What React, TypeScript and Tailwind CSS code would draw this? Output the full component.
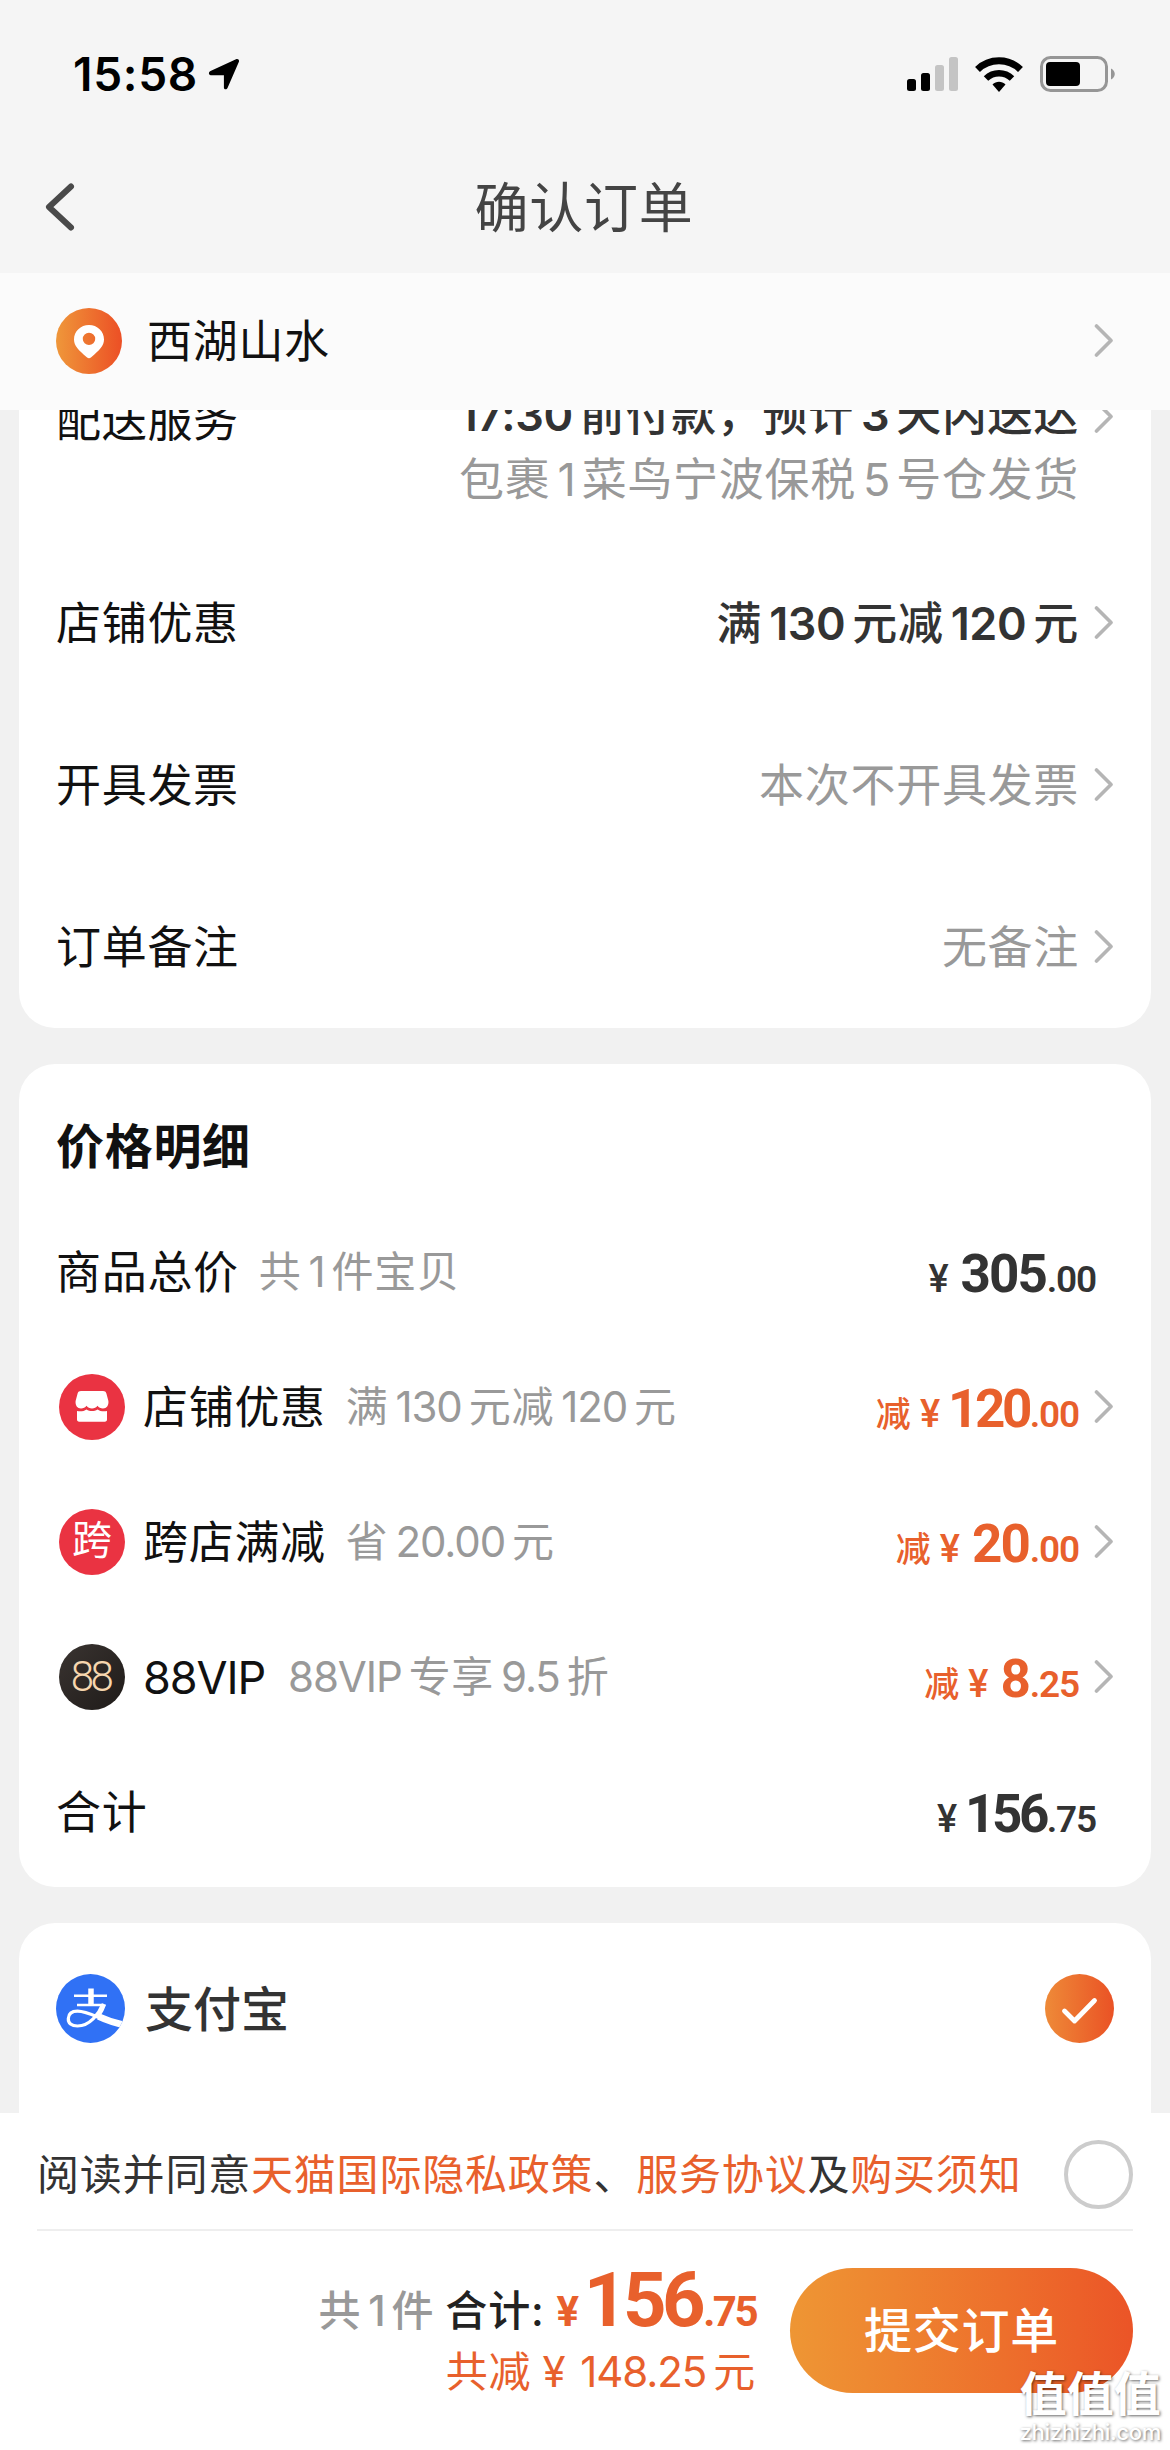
import type { ReactNode } from 'react';
import clsx from 'clsx';

interface OrderOption {
  label: string;
  value: string;
  strong?: boolean;
}

interface PriceLine {
  label: string;
  note?: string;
  icon?: ReactNode;
  integer: string;
  decimal: string;
  discount?: boolean;
}

const orderOptions: OrderOption[] = [
  { label: '店铺优惠', value: '满130元减120元', strong: true },
  { label: '开具发票', value: '本次不开具发票' },
  { label: '订单备注', value: '无备注' },
];

const priceLines: PriceLine[] = [
  { label: '商品总价', note: '共1件宝贝', integer: '305', decimal: '.00' },
  { label: '店铺优惠', note: '满130元减120元', icon: <ShopIcon />, integer: '120', decimal: '.00', discount: true },
  { label: '跨店满减', note: '省20.00元', icon: <CrossIcon />, integer: '20', decimal: '.00', discount: true },
  { label: '88VIP', note: '88VIP专享9.5折', icon: <VipIcon />, integer: '8', decimal: '.25', discount: true },
  { label: '合计', integer: '156', decimal: '.75' },
];

// Chinese text with slightly spaced, tighter set latin runs
function Mixed({ text, strong }: { text: string; strong?: boolean }) {
  return text.split(/([!-~]+)/).map((part, i) =>
    i % 2 === 1 ? (
      <span
        key={i}
        className={clsx(
          'mr-[7px]',
          strong ? 'font-semibold tracking-[-0.4px]' : 'tracking-[-1.1px]',
          !text.startsWith(part) && 'ml-[7px]'
        )}
      >
        {part}
      </span>
    ) : (
      part
    )
  );
}

function ShopIcon() {
  return (
    <svg className="size-[66px]" viewBox="0 0 66 66">
      <circle cx="33" cy="33" r="33" fill="#ea3342" />
      <path
        d="M22 17h22c1.800 0 2.800.8 3.400 2.400l2 7.600c.5 4.500-1.800 7.500-5.400 7.500-2.400 0-4.200-1-5.500-2.700-1.300 1.700-3.200 2.700-5.500 2.700s-4.200-1-5.500-2.700c-1.300 1.700-3.100 2.700-5.500 2.700-3.600 0-5.900-3-5.400-7.500l2-7.600c.6-1.600 1.600-2.400 3.400-2.400z"
        fill="#fff"
      />
      <path d="M18 37c3.600.8 7 .2 9.500-1.600 3.300 2 7.700 2 11 0C41 37.200 44.400 37.800 48 37v8.500c0 1.400-.8 2.200-2.200 2.200H20.200c-1.400 0-2.200-.8-2.200-2.200z" fill="#fff" />
    </svg>
  );
}

function CrossIcon() {
  return (
    <span className="flex size-[66px] items-center justify-center rounded-full bg-[#ea3342] text-[40px] leading-none tracking-[0px] text-white">
      <span className="-mt-1">跨</span>
    </span>
  );
}

function VipIcon() {
  return (
    <span className="flex size-[66px] items-center justify-center rounded-full bg-linear-to-br from-[#3a3431] to-[#1f1b19] font-['Roboto',sans-serif] text-[42px] leading-none font-light tracking-[-3.5px] text-[#f6d6ae]">
      <span className="-ml-[3px]">88</span>
    </span>
  );
}

function LocationIcon() {
  return (
    <svg className="size-[66px]" viewBox="0 0 66 66">
      <defs>
        <linearGradient id="pin" x1="0" y1="0" x2="1" y2="0">
          <stop offset="0" stopColor="#ef973a" />
          <stop offset="1" stopColor="#ec4f25" />
        </linearGradient>
      </defs>
      <circle cx="33" cy="33" r="33" fill="url(#pin)" />
      <path
        fillRule="evenodd"
        d="M33 17c8.300 0 15 6.300 15 14.500 0 6.500-4.500 10.500-12.800 17.800a3.200 3.200 0 0 1-4.400 0C22.500 42 18 38 18 31.500 18 23.300 24.700 17 33 17zm0 7.700a6.200 6.200 0 1 0 0 12.400 6.200 6.200 0 0 0 0-12.400z"
        fill="#fff"
      />
    </svg>
  );
}

function AlipayIcon() {
  return (
    <svg className="size-[69px]" viewBox="0 0 69 69">
      <defs>
        <clipPath id="alipay">
          <circle cx="34.500" cy="34.500" r="34.500" />
        </clipPath>
      </defs>
      <g clipPath="url(#alipay)" fill="none" stroke="#fff">
        <rect width="69" height="69" fill="#3071f5" stroke="none" />
        <path d="M35 14.500V31" strokeWidth="5.500" />
        <path d="M18 21.800h33M21 31h26.500" strokeWidth="2.600" />
        <path d="M46.500 30.500C43 39.500 34 52 21.500 52c-6 0-9.500-3-9.200-7.500.3-4.800 4-7.300 9.200-7.300 9 0 19 5.800 30.500 10" strokeWidth="3.200" />
        <path d="M42.500 42.500c7.500 3.500 15.500 6.500 28 9" strokeWidth="6.500" />
        <path d="M48 30c-1.500 4.500-3.600 8.500-6.500 12.500" strokeWidth="4.500" />
      </g>
    </svg>
  );
}

function Chevron() {
  return (
    <svg className="ml-[15px] h-[34px] w-5 shrink-0" viewBox="0 0 20 34">
      <path d="M2.500 2 17 16.500 2.500 31" fill="none" stroke="#b5b5b5" strokeWidth="3.600" strokeLinecap="round" strokeLinejoin="round" />
    </svg>
  );
}

function StatusBar() {
  return (
    <div className="flex h-[148px] items-center pl-[73px] pr-[54px] text-black">
      <span className="w-[125px] text-[46px] leading-none font-semibold tracking-[0.7px] whitespace-nowrap">15:58</span>
      <svg className="ml-[10px] size-8" viewBox="0 0 32 32">
        <path d="M2.500 13 28 1.200c2-.9 3.700.7 2.800 2.800L19.500 30c-.9 2.100-3.600 1.600-3.600-.6V17.200H2.800C.5 17.200.2 14 2.500 13z" />
      </svg>
      <div className="ml-auto flex items-center">
        <svg className="h-[34px] w-[51px]" viewBox="0 0 51 34">
          <rect y="22" width="9" height="12" rx="2.500" />
          <rect x="14" y="16" width="9" height="18" rx="2.500" />
          <rect x="28" y="8" width="9" height="26" rx="2.500" fill="#c4c4c4" />
          <rect x="42" width="9" height="34" rx="2.500" fill="#c4c4c4" />
        </svg>
        <svg className="ml-[17px] h-9 w-12" viewBox="0 0 48 36">
          <path d="M2.500 13.500a31 31 0 0 1 43 0" fill="none" stroke="#000" strokeWidth="7" />
          <path d="M11 22.500a19 19 0 0 1 26 0" fill="none" stroke="#000" strokeWidth="6.500" />
          <path d="M24 36l-6.500-7.500c3.600-3.800 9.400-3.800 13 0z" />
        </svg>
        <svg className="ml-[17px] h-9 w-[76px]" viewBox="0 0 76 36">
          <rect x="1.500" y="1.500" width="65" height="33" rx="9" fill="none" stroke="#969696" strokeWidth="3" />
          <rect x="6" y="6" width="34" height="24" rx="4" />
          <path d="M71 12.500c5 2.500 5 8.500 0 11z" fill="#969696" />
        </svg>
      </div>
    </div>
  );
}

function Price({ integer, decimal, discount }: Pick<PriceLine, 'integer' | 'decimal' | 'discount'>) {
  return (
    <div
      className={clsx(
        "mt-[5px] ml-auto flex items-baseline font-['Roboto','Noto_Sans_CJK_SC',sans-serif] leading-none tracking-[0px]",
        discount ? 'text-[#e8602c]' : 'mr-[18px] text-[#333]'
      )}
    >
      {discount && <span className="mr-[9px] text-[35px] leading-none font-medium">减</span>}
      <span className={clsx('text-[38px] font-medium', integer.startsWith('1') ? 'mr-[8px]' : 'mr-[12px]')}>¥</span>
      <span className={clsx('text-[53px] font-bold', integer.startsWith('1') ? 'tracking-[-3.5px]' : 'tracking-[-2px]')}>
        {integer}
      </span>
      <span className="ml-px text-[37px] font-semibold tracking-[-1.2px]">{decimal}</span>
    </div>
  );
}

export default function App() {
  return (
    <div className="relative flex h-[2450px] w-[1170px] flex-col overflow-hidden bg-[#f1f1f1] font-['Inter','Noto_Sans_CJK_SC',sans-serif] text-[45px] leading-none tracking-[0.7px] text-[#111]">
      <header className="h-[273px] shrink-0 bg-[#f5f5f5]">
        <StatusBar />
        <div className="grid h-[118px] grid-cols-[1fr_auto_1fr] items-center pl-[44px] pr-[46px] text-[#444]">
          <svg className="h-[50px] w-8" viewBox="0 0 32 50">
            <path d="M27 4.500 5 25l22 20.500" fill="none" stroke="#4a4a4a" strokeWidth="6" strokeLinecap="round" strokeLinejoin="round" />
          </svg>
          <h1 className="pt-[3px] text-[54px] leading-none">确认订单</h1>
        </div>
      </header>

      <div className="flex h-[137px] shrink-0 items-center bg-[#fbfbfb] pb-0.5 pl-14 pr-[56px]">
        <LocationIcon />
        <span className="ml-[25px] pt-0.5">西湖山水</span>
        <span className="ml-auto">
          <Chevron />
        </span>
      </div>

      {/* Scrolled content, cut off by the address bar above */}
      <main className="flex min-h-0 flex-1 flex-col gap-[36px] overflow-hidden px-[19px]">
        <section className="-mt-[60px] shrink-0 rounded-b-[36px] bg-white pl-[37px] pr-[37px]">
          <div className="flex h-[192px] items-start">
            <span className="mt-[48px]">配送服务</span>
            <div className="mt-[42px] ml-auto flex flex-col items-end gap-[20px]">
              <span className="font-medium text-[#333]">
                <Mixed text="17:30前付款，预计3天内送达" strong />
              </span>
              <span className="text-[#999]">
                <Mixed text="包裹1菜鸟宁波保税5号仓发货" />
              </span>
            </div>
            <span className="mt-[50px]">
              <Chevron />
            </span>
          </div>
          {orderOptions.map((option) => (
            <div key={option.label} className="flex h-[162px] items-center justify-between">
              <span>{option.label}</span>
              <div className="flex items-center">
                <span className={option.strong ? 'font-medium text-[#333]' : 'text-[#999]'}>
                  <Mixed text={option.value} strong={option.strong} />
                </span>
                <Chevron />
              </div>
            </div>
          ))}
        </section>

        <section className="shrink-0 rounded-[36px] bg-white pb-2 pl-[37px] pr-[37px]">
          <h2 className="flex h-[140px] items-center pt-[26px] text-[48px] leading-none font-semibold">价格明细</h2>
          {priceLines.map((line) => (
            <div key={line.label} className="flex h-[135px] items-center">
              {line.icon && <span className="mr-[18px] ml-[3px]">{line.icon}</span>}
              <span className="pt-px">
                <Mixed text={line.label} />
              </span>
              {line.note && (
                <span className={clsx('text-[42px] text-[#999]', line.label === '88VIP' ? 'ml-4' : 'ml-5')}>
                  <Mixed text={line.note} />
                </span>
              )}
              <Price integer={line.integer} decimal={line.decimal} discount={line.discount} />
              {line.discount && <Chevron />}
            </div>
          ))}
        </section>

        <section className="h-[220px] shrink-0 rounded-t-[36px] bg-white pl-[37px] pr-[37px] pt-[51px]">
          <div className="flex items-center">
            <AlipayIcon />
            <span className="ml-5 pt-0.5 text-[48px] font-medium tracking-[0px] text-[#333]">支付宝</span>
            <svg className="ml-auto size-[69px]" viewBox="0 0 69 69">
              <defs>
                <linearGradient id="check" x1="0" y1="0" x2="1" y2="0">
                  <stop offset="0" stopColor="#ee8a38" />
                  <stop offset="1" stopColor="#ea5225" />
                </linearGradient>
              </defs>
              <circle cx="34.500" cy="34.500" r="34.500" fill="url(#check)" />
              <path d="M19.500 37 29.500 47 49.500 26.500" fill="none" stroke="#fff" strokeWidth="4.800" strokeLinecap="round" strokeLinejoin="round" />
            </svg>
          </div>
        </section>
      </main>

      <footer className="h-[337px] shrink-0 bg-white pl-[37px] pr-[37px] text-[42px] tracking-[0.8px]">
        <div className="flex h-[118px] items-center justify-between border-b-2 border-[#eee] pt-[7px]">
          <p className="text-[#333]">
            阅读并同意<span className="text-[#e8602c]">天猫国际隐私政策</span>、<span className="text-[#e8602c]">服务协议</span>及
            <span className="text-[#e8602c]">购买须知</span>
          </p>
          <span className="size-[69px] rounded-full border-4 border-[#ccc]" />
        </div>
        <div className="flex items-start justify-end pt-[37px]">
          <div className="mr-[34px] flex flex-col items-end">
            <div className="-mt-[6px] flex items-baseline">
              <span className="font-medium text-[#999]">
                <Mixed text="共1件" />
              </span>
              <span className="ml-[11px] font-medium text-[#222]">合计:</span>
              <span className="ml-3 flex items-baseline font-['Roboto',sans-serif] font-bold text-[#e8602c]">
                <span className="mr-1">¥</span>
                <span className="text-[76px] leading-none tracking-[-4.5px]">156</span>
                <span className="ml-0.5 tracking-[-2.5px]">.75</span>
              </span>
            </div>
            <span className="mt-[13px] text-[#e8602c]">
              共减
              <span className="mr-[14px] ml-[11px]">¥</span>
              <Mixed text="148.25元" />
            </span>
          </div>
          <button className="h-[125px] w-[343px] rounded-full bg-linear-to-r from-[#ee9634] to-[#eb5427] text-[48px] leading-none font-medium text-white">
            提交订单
          </button>
        </div>
      </footer>

      {/* Site watermark */}
      <div className="absolute right-[9px] bottom-[7px] flex flex-col items-center gap-1 text-white [text-shadow:1px_1px_3px_rgba(0,0,0,0.6)]">
        <span className="text-[47px] font-bold tracking-[0px]">值值值</span>
        <span className="text-[22px] font-medium tracking-[-0.3px]">zhizhizhi.com</span>
      </div>
    </div>
  );
}
